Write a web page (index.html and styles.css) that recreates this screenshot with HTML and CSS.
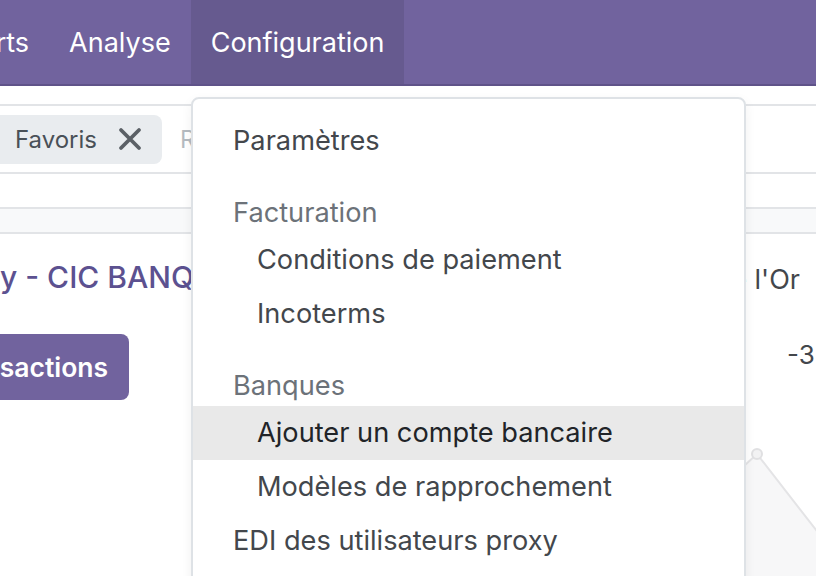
FILE: index.html
```html
<!DOCTYPE html>
<html lang="fr">
<head>
    <meta charset="UTF-8">
    <meta name="viewport" content="width=device-width, initial-scale=1.0">
    <title>Comptabilité - Configuration</title>
    <link rel="stylesheet" href="styles.css">
</head>
<body>
    <!-- Main menu -->
    <nav class="navbar">
        <div class="nav-menu">
            <a href="#" class="nav-item">Rapports</a>
            <a href="#" class="nav-item">Analyse</a>
            <a href="#" class="nav-item active">Configuration</a>
        </div>
    </nav>

    <!-- Control panel -->
    <div class="control-panel">
        <div class="searchbar">
            <div class="facet">
                <span>Favoris</span>
                <svg class="facet-remove" width="24" height="24" viewBox="0 0 24 24">
                    <path d="M3 3 L21 21 M21 3 L3 21" stroke="#5b6066" stroke-width="3.8" stroke-linecap="round"/>
                </svg>
            </div>
            <span class="search-input">Rechercher...</span>
        </div>
        <div class="view-strip"></div>
    </div>

    <!-- Dashboard -->
    <div class="dashboard">
        <div class="card card-left">
            <div class="card-title">y - CIC BANQUE</div>
            <button class="btn-primary">Transactions</button>
        </div>
        <div class="card card-right">
            <div class="card-title-alt">Banque de l'Or</div>
            <div class="balance">-3 250,00 €</div>
            <svg class="chart" width="256" height="201" viewBox="0 0 256 201">
                <polygon points="120,150 197,79 270,173 270,201 120,201" fill="#f7f7f8"/>
                <polyline points="120,150 197,79 270,173" fill="none" stroke="#e4e4e6" stroke-width="2"/>
                <circle cx="197" cy="79" r="5" fill="#f2f2f3" stroke="#e0e0e2" stroke-width="2"/>
            </svg>
        </div>
    </div>

    <!-- Configuration dropdown -->
    <div class="dropdown">
        <a href="#" class="dropdown-item">Paramètres</a>
        <div class="dropdown-header">Facturation</div>
        <a href="#" class="dropdown-item sub">Conditions de paiement</a>
        <a href="#" class="dropdown-item sub">Incoterms</a>
        <div class="dropdown-header">Banques</div>
        <a href="#" class="dropdown-item sub focus">Ajouter un compte bancaire</a>
        <a href="#" class="dropdown-item sub">Modèles de rapprochement</a>
        <a href="#" class="dropdown-item">EDI des utilisateurs proxy</a>
    </div>
</body>
</html>
```

FILE: styles.css
```css
* {
    margin: 0;
    padding: 0;
    box-sizing: border-box;
}
body {
    font-family: Inter, Roboto, sans-serif;
    background-color: #fff;
    color: #43474c;
    width: 816px;
    height: 576px;
    overflow: hidden;
    position: relative;
}
a {
    text-decoration: none;
    color: inherit;
}
.navbar {
    height: 86px;
    background-color: #71639e;
    border-bottom: 2px solid #5f5389;
    overflow: hidden;
}
.nav-menu {
    display: flex;
    height: 100%;
    margin-left: -106px;
}
.nav-item {
    display: flex;
    align-items: center;
    padding: 0 20px;
    color: #fff;
    font-size: 27px;
    white-space: nowrap;
}
.nav-item.active {
    background-color: #665a8f;
}
.control-panel {
    padding-top: 18px;
}
.searchbar {
    display: flex;
    align-items: center;
    height: 70px;
    border-top: 2px solid #e2e4e7;
    border-bottom: 2px solid #e2e4e7;
}
.facet {
    display: flex;
    align-items: center;
    gap: 21px;
    height: 49px;
    margin-left: -10px;
    padding: 0 20px 0 25px;
    background-color: #e9ecef;
    border-radius: 8px;
    font-size: 24px;
    color: #495057;
}
.search-input {
    margin-left: 18px;
    font-size: 24px;
    color: #b4bac0;
}
.view-strip {
    margin-top: 33px;
    height: 27px;
    background-color: #f8f9fa;
    border-top: 2px solid #e2e4e7;
    border-bottom: 2px solid #e2e4e7;
}
.dashboard {
    display: flex;
}
.card {
    padding-top: 24px;
}
.card-left {
    width: 560px;
    flex-shrink: 0;
}
.card-right {
    flex: 1;
    overflow: hidden;
}
.card-title {
    font-size: 30px;
    font-weight: 500;
    line-height: 38px;
    color: #5c5190;
    white-space: nowrap;
}
.btn-primary {
    display: block;
    margin-top: 38px;
    margin-left: -78px;
    height: 66px;
    padding: 0 21px 0 20px;
    background-color: #71639e;
    color: #fff;
    border: none;
    border-radius: 8px;
    font-family: inherit;
    font-size: 26.5px;
    font-weight: 600;
}
.card-title-alt {
    font-size: 27px;
    line-height: 44px;
    text-align: right;
    padding-right: 16px;
    white-space: nowrap;
}
.balance {
    margin-top: 33px;
    padding-left: 227px;
    font-size: 26px;
    line-height: 40px;
    white-space: nowrap;
}
.chart {
    display: block;
}
.dropdown {
    position: absolute;
    left: 191px;
    top: 97px;
    width: 555px;
    height: 520px;
    padding-top: 15px;
    background-color: #fff;
    border: 2px solid #dee2e6;
    border-radius: 8px;
    box-shadow: 0 4px 12px rgba(0, 0, 0, 0.06);
}
.dropdown-item {
    display: block;
    height: 54px;
    line-height: 54px;
    padding: 0 40px;
    font-size: 27.2px;
    color: #43474c;
    white-space: nowrap;
}
.dropdown-item.sub {
    padding-left: 64px;
}
.dropdown-item.focus {
    background-color: #e9e9e9;
    color: #212428;
}
.dropdown-header {
    padding: 24px 40px 0;
    line-height: 41px;
    font-size: 27.2px;
    color: #6c7279;
}
```
